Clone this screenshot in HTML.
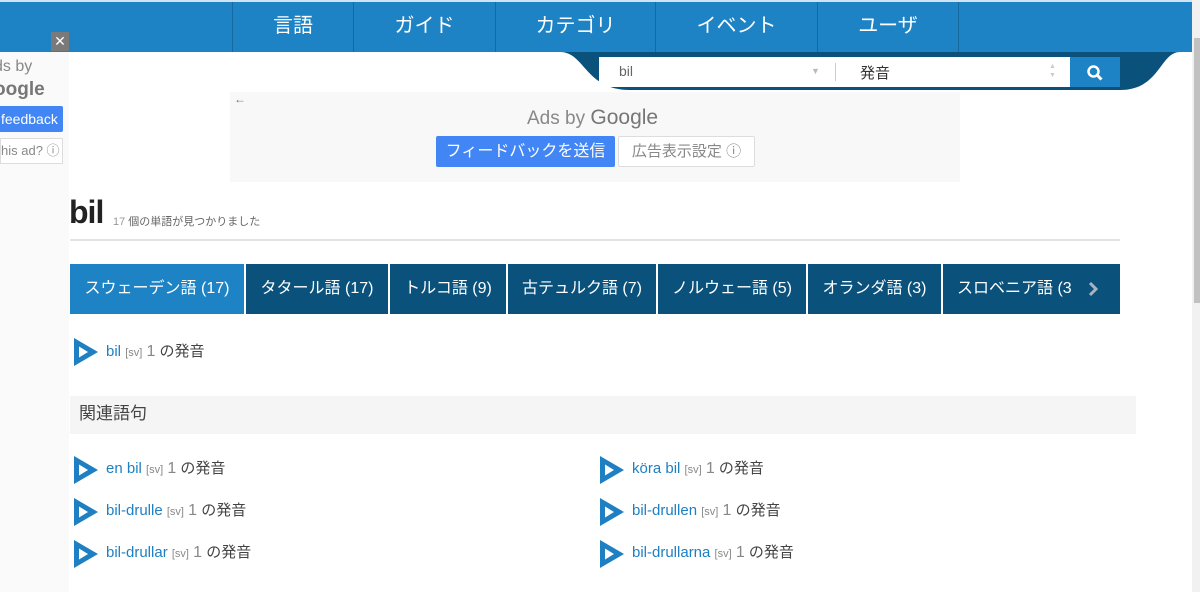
<!DOCTYPE html>
<html><head><meta charset="utf-8"><style>
*{margin:0;padding:0;box-sizing:border-box}
body{width:1200px;height:592px;overflow:hidden;background:#fff;font-family:"Liberation Sans","Noto Sans CJK JP",sans-serif;position:relative;color:#333}
.abs{position:absolute}
.nav{left:0;top:0;width:1192px;height:52px;background:#1e83c5;border-top:2px solid #cfe3f2}
.nav div{position:absolute;top:0;height:50px;border-left:1px solid #16699f;color:#fff;font-size:20px;text-align:center;line-height:48px}
.tab{position:absolute;top:264px;height:50px;background:#0a527c;color:#fff;font-size:16px;line-height:50px;text-align:center}
.play{position:absolute;width:24px;height:28px}
.w{position:absolute;font-size:15px;color:#444}
.w a{color:#1e7fc2;text-decoration:none}
.w small{font-size:11px;color:#888}
.w .n{color:#888;font-size:16px}
</style></head><body>
<div class="abs nav">
<div style="left:232px;width:121px">言語</div>
<div style="left:353px;width:142px">ガイド</div>
<div style="left:495px;width:160px">カテゴリ</div>
<div style="left:655px;width:162px">イベント</div>
<div style="left:817px;width:141px">ユーザ</div>
<div style="left:958px;width:1px"></div>
</div>
<svg class="abs" style="left:560px;top:52px" width="620" height="40"><path d="M0 0 C25 0 25 38 70 38 L560 38 C600 38 600 0 620 0 Z" fill="#0a527c"/></svg>
<div class="abs" style="left:599px;top:57px;width:471px;height:30px;background:#fff"></div>
<div class="abs" style="left:619px;top:63px;font-size:14px;color:#666">bil</div>
<div class="abs" style="left:811px;top:66px;font-size:9px;color:#bbb">▼</div>
<div class="abs" style="left:835px;top:63px;width:1px;height:18px;background:#ccc"></div>
<div class="abs" style="left:860px;top:62px;font-size:15px;color:#333">発音</div>
<div class="abs" style="left:1049px;top:62px;font-size:7px;color:#ccc;line-height:9px">▲<br>▼</div>
<div class="abs" style="left:1070px;top:57px;width:50px;height:30px;background:#1e83c5"></div>
<svg class="abs" style="left:1086px;top:64px" width="18" height="18"><circle cx="7.5" cy="7.5" r="5" fill="none" stroke="#fff" stroke-width="2.5"/><path d="M11 11l4.5 4.5" stroke="#fff" stroke-width="3"/></svg>
<div class="abs" style="left:1192px;top:0;width:8px;height:592px;background:#f1f1f1"></div>
<div class="abs" style="left:1194px;top:38px;width:6px;height:265px;background:#c1c1c1"></div>
<!-- left ad -->
<div class="abs" style="left:0;top:52px;width:69px;height:540px;background:#fafafa"></div>
<div class="abs" style="left:51px;top:32px;width:18px;height:19px;background:#7a7a7a;color:#fff;font-size:14px;text-align:center;line-height:19px">✕</div>
<div class="abs" style="left:-6px;top:58px;font-size:16px;color:#888">ds by</div>
<div class="abs" style="left:-6px;top:79px;font-size:19px;color:#777;font-weight:bold">oogle</div>
<div class="abs" style="left:0;top:106px;width:63px;height:26px;background:#4285f4;color:#fff;font-size:14px;line-height:26px;padding-left:1px;border-radius:0 2px 2px 0">feedback</div>
<div class="abs" style="left:0;top:138px;width:63px;height:26px;background:#fff;border:1px solid #ddd;color:#888;font-size:13px;line-height:24px">his ad? ⓘ</div>
<!-- center ad -->
<div class="abs" style="left:230px;top:92px;width:730px;height:90px;background:#f8f8f8"></div>
<div class="abs" style="left:234px;top:92px;font-size:12px;color:#777">←</div>
<div class="abs" style="left:527px;top:106px;font-size:19px;color:#888">Ads by <span style="font-size:21px;color:#777">Google</span></div>
<div class="abs" style="left:436px;top:136px;width:179px;height:31px;background:#4285f4;color:#fff;font-size:16px;line-height:31px;text-align:center;border-radius:2px">フィードバックを送信</div>
<div class="abs" style="left:618px;top:136px;width:137px;height:31px;background:#fff;border:1px solid #ddd;color:#888;font-size:15px;line-height:29px;text-align:center;border-radius:2px">広告表示設定 ⓘ</div>
<!-- title -->
<div class="abs" style="left:69px;top:194px;font-size:32px;font-weight:bold;color:#222;letter-spacing:-1px">bil</div>
<div class="abs" style="left:113px;top:213px;font-size:11px;color:#666"><span style="color:#999">17</span> 個の単語が見つかりました</div>
<div class="abs" style="left:70px;top:239px;width:1050px;height:2px;background:#e3e3e3"></div>
<div class="tab" style="left:70px;width:174px;background:#1e83c5">スウェーデン語 (17)</div>
<div class="tab" style="left:246px;width:142px">タタール語 (17)</div>
<div class="tab" style="left:390px;width:116px">トルコ語 (9)</div>
<div class="tab" style="left:508px;width:148px">古テュルク語 (7)</div>
<div class="tab" style="left:658px;width:148px">ノルウェー語 (5)</div>
<div class="tab" style="left:808px;width:133px">オランダ語 (3)</div>
<div class="tab" style="left:943px;width:177px;text-align:left;padding-left:14px">スロベニア語 (3</div>
<svg class="abs" style="left:1087px;top:281px" width="12" height="16"><path d="M3 2l6 6l-6 6" fill="none" stroke="#aab4c0" stroke-width="3"/></svg>
<svg width="0" height="0" style="position:absolute"><defs><symbol id="p" viewBox="0 0 24 28"><path d="M0 0L24 14L0 28Z" fill="#1e7fc2"/><path d="M5 8.5L14 14L5 19.5Z" fill="#fff"/></symbol></defs></svg>
<svg class="play" style="left:74px;top:338px"><use href="#p"/></svg>
<div class="w" style="left:106px;top:340px"><a>bil</a> <small>[sv]</small> <span class="n">1</span> の発音</div>
<div class="abs" style="left:70px;top:396px;width:1066px;height:38px;background:#f5f5f5;font-size:17px;color:#444;line-height:36px;padding-left:9px">関連語句</div>
<svg class="play" style="left:74px;top:456px"><use href="#p"/></svg>
<div class="w" style="left:106px;top:457px"><a>en bil</a> <small>[sv]</small> <span class="n">1</span> の発音</div>
<svg class="play" style="left:74px;top:498px"><use href="#p"/></svg>
<div class="w" style="left:106px;top:499px"><a>bil-drulle</a> <small>[sv]</small> <span class="n">1</span> の発音</div>
<svg class="play" style="left:74px;top:540px"><use href="#p"/></svg>
<div class="w" style="left:106px;top:541px"><a>bil-drullar</a> <small>[sv]</small> <span class="n">1</span> の発音</div>
<svg class="play" style="left:600px;top:456px"><use href="#p"/></svg>
<div class="w" style="left:632px;top:457px"><a>köra bil</a> <small>[sv]</small> <span class="n">1</span> の発音</div>
<svg class="play" style="left:600px;top:498px"><use href="#p"/></svg>
<div class="w" style="left:632px;top:499px"><a>bil-drullen</a> <small>[sv]</small> <span class="n">1</span> の発音</div>
<svg class="play" style="left:600px;top:540px"><use href="#p"/></svg>
<div class="w" style="left:632px;top:541px"><a>bil-drullarna</a> <small>[sv]</small> <span class="n">1</span> の発音</div>
</body></html>
